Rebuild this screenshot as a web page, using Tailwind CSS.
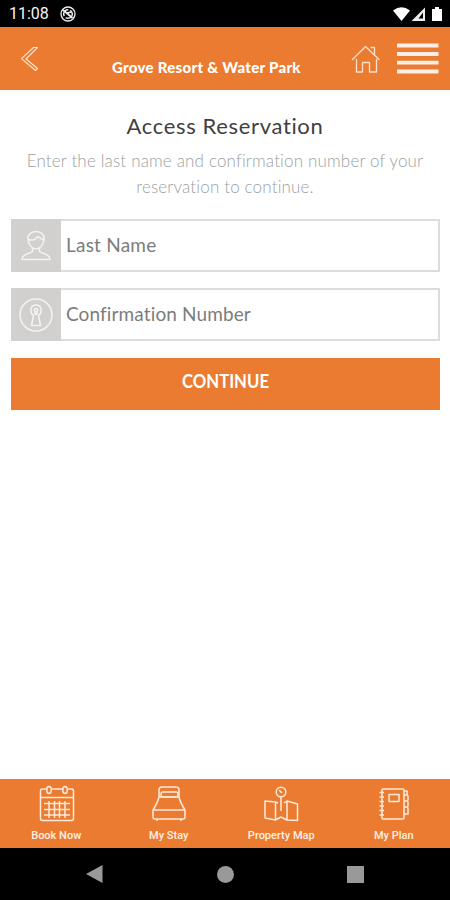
<!DOCTYPE html>
<html lang="en">
<head>
<meta charset="utf-8">
<title>Access Reservation</title>
<script src="https://cdn.jsdelivr.net/npm/@tailwindcss/browser@4"></script>
</head>
<body class="bg-white">
<div class="w-[450px] h-[900px] flex flex-col overflow-hidden bg-white font-['Lato','Liberation_Sans',sans-serif]">
  <div class="h-[27px] bg-black flex items-center pl-[9px] pr-[7px] shrink-0">
    <span class="font-['Roboto',sans-serif] text-[16px] leading-[29px] text-gray-100 w-[39px] whitespace-nowrap">11:08</span>
    <svg class="ml-[11px]" width="18" height="18" viewBox="0 0 18 18" fill="none" stroke="#eee"><circle cx="9" cy="9" r="7" stroke-width="1.300"/><circle cx="9" cy="9" r="4.300" stroke-width="1.500" stroke-dasharray="9 2"/><path d="M4 5L13.500 13M8 8l4-1" stroke-width="1.800"/></svg>
    <svg class="ml-auto" width="50" height="18" viewBox="0 0 50 18"><path d="M0 5.500Q8.500-1 17 5.500L8.500 16Z" fill="#fff"/><path d="M18.500 16L32 2.500V16Z" fill="#eee"/><path d="M25.500 13.500L30 7.500V13.500Z" fill="#000"/><path d="M39 4h3V2h4v2h3v12H39Z" fill="#fff"/></svg>
  </div>
  <header class="h-[63px] bg-[#ea7b31] flex items-start shrink-0">
    <svg class="ml-[20px] mt-[19px]" width="19" height="26" viewBox="0 0 19 26" fill="none" stroke="#ffe6d3" stroke-width="1.100" stroke-linejoin="round"><path d="M13.500 1.500H17.500L6 13L17.500 22.500L15.500 24.500L1.500 12.700Z"/></svg>
    <h1 class="w-[190px] ml-[73px] mt-[29px] text-[15px] tracking-[0.290px] leading-[22px] font-black text-white whitespace-nowrap">Grove Resort &amp; Water Park</h1>
    <svg class="ml-[49px] mt-[18px]" width="30" height="29" viewBox="0 0 30 29" fill="none" stroke="#ffe3cf" stroke-width="1.300" stroke-linejoin="round"><path d="M1 15L14.500 1.500L28.500 15M5.500 14V27H11.500V17.500H18.500V27H25.500V14M19.500 2.500H23.500V10"/></svg>
    <svg class="ml-[16px] mt-[15px]" width="42" height="34" viewBox="0 0 42 34" stroke="#fff0e6" stroke-width="3.800"><path d="M0 3.500H41.500M0 12H41.500M0 20.700H41.500M0 29.500H41.500"/></svg>
  </header>
  <main class="flex-1 px-[11px] pt-[22px]">
    <h2 class="text-center text-[22px] tracking-[0.650px] leading-[28px] text-[#404040]">Access Reservation</h2>
    <p class="text-center text-[17px] tracking-[0.160px] leading-[26px] font-light text-[#9b9fa3] mt-[8px] whitespace-nowrap">Enter the last name and confirmation number of your<br>reservation to continue.</p>
    <div class="mt-[19px] w-[429px] h-[53px] flex">
      <div class="w-[50px] bg-[#d2d0cf] flex items-center justify-center shrink-0">
        <svg width="32" height="32" viewBox="0 0 32 32" fill="none" stroke="#f3f2f1" stroke-width="1.500" stroke-linejoin="round"><path d="M8 10C7 5 11 1.500 16 1.500S25 5 24 10C23 15 20 19 16 19S9 15 8 10ZM8.500 9.500C12 11 16 9.500 17.500 6.500L23.500 10M12.500 18V21.500C10 24 2.500 23 2 29.500H30C29.500 23 22 24 19.500 21.500V18"/></svg>
      </div>
      <div class="flex-1 border-2 border-l-0 border-[#dedddc] flex items-center pl-[5px] text-[19px] tracking-[0.220px] text-[#7c7c7c]">Last Name</div>
    </div>
    <div class="mt-[16px] w-[429px] h-[53px] flex">
      <div class="w-[50px] bg-[#d2d0cf] flex items-center justify-center shrink-0">
        <svg width="36" height="36" viewBox="0 0 36 36" fill="none" stroke="#f3f2f1" stroke-width="1.600" stroke-linejoin="round"><circle cx="18" cy="18" r="16"/><path d="M15.500 18.500C11.500 15.500 12 8 18 8S24.500 15.500 20.500 18.500L22.500 28.500H13.500ZM17.200 18V14.500C15.500 13 16.500 11.500 18 11.500S20.500 13 18.800 14.500V18"/></svg>
      </div>
      <div class="flex-1 border-2 border-l-0 border-[#dedddc] flex items-center pl-[5px] text-[19px] tracking-[0.120px] text-[#7c7c7c]">Confirmation Number</div>
    </div>
    <div class="mt-[17px] w-[429px] h-[52px] bg-[#ea7b31] text-center text-[19px] leading-[46px] font-bold text-white"><span class="inline-block scale-x-[0.880]">CONTINUE</span></div>
  </main>
  <nav class="h-[69px] bg-[#ea7b31] grid grid-cols-4 shrink-0 font-['Roboto',sans-serif] text-[11px] leading-[14px] font-medium text-[#fff0e5] text-center">
    <div class="flex flex-col items-center pt-[6px]">
      <svg class="relative left-[0.500px]" width="36" height="38" viewBox="0 0 36 38" fill="none" stroke="#ffeadb" stroke-width="1.500"><rect x="1.500" y="4" width="33" height="31.500" rx="2"/><path d="M2 12.500H34M5 18.500H31M5 24.500H31M5 30H31M10 16V33M15.500 16V33M20.500 16V33M26 16V33"/><ellipse cx="10" cy="5" rx="2.300" ry="3.500" fill="#ea7b31"/><ellipse cx="26" cy="5" rx="2.300" ry="3.500" fill="#ea7b31"/></svg>
      <span class="mt-[6px]">Book Now</span>
    </div>
    <div class="flex flex-col items-center pt-[6px]">
      <svg width="36" height="38" viewBox="0 0 36 38" fill="none" stroke="#ffeadb" stroke-width="1.500" stroke-linejoin="round"><path d="M8 12V5Q8 2 11 2H25Q28 2 28 5V12M8 12H28Q29 17 34 25V32Q34 34 32 34H4Q2 34 2 32V25Q7 17 8 12ZM2 25H34M6 34V36M30 34V36"/><rect x="10" y="7" width="17" height="5" rx="2"/></svg>
      <span class="mt-[6px]">My Stay</span>
    </div>
    <div class="flex flex-col items-center pt-[6px]">
      <svg width="36" height="38" viewBox="0 0 36 38" fill="none" stroke="#ffeadb" stroke-width="1.500" stroke-linejoin="round"><circle cx="18" cy="7" r="4.800"/><path d="M16 5L19 8M18 12V26M15 18L12.500 17L2 16V33L12.500 35L18 32L24 35L34.500 35.500V19L24 16L21 18M12.500 17V35M24 16V35"/></svg>
      <span class="mt-[6px]">Property Map</span>
    </div>
    <div class="flex flex-col items-center pt-[6px]">
      <svg width="36" height="38" viewBox="0 0 36 38" fill="none" stroke="#ffeadb" stroke-width="1.500" stroke-linejoin="round"><rect x="6" y="4" width="22" height="30" rx="1"/><rect x="13" y="9.500" width="10" height="7"/><path d="M3.500 7.500H8M3.500 12H8M3.500 16.500H8M3.500 21H8M3.500 25.500H8M3.500 30H8M28 6H31V10H28M31 10L32 11V15L31 16H28M28 16H31L32 17V21L31 22H28M31 22L32 23V29H28"/></svg>
      <span class="mt-[6px]">My Plan</span>
    </div>
  </nav>
  <div class="h-[52px] bg-black flex items-center shrink-0">
    <svg class="ml-[86px]" width="17" height="18" viewBox="0 0 17 18"><path d="M0 9L16.500 0V18Z" fill="#999"/></svg>
    <div class="ml-[114px] size-[17px] rounded-full bg-[#999]"></div>
    <div class="ml-[113px] size-[17px] bg-[#999]"></div>
  </div>
</div>
</body>
</html>
